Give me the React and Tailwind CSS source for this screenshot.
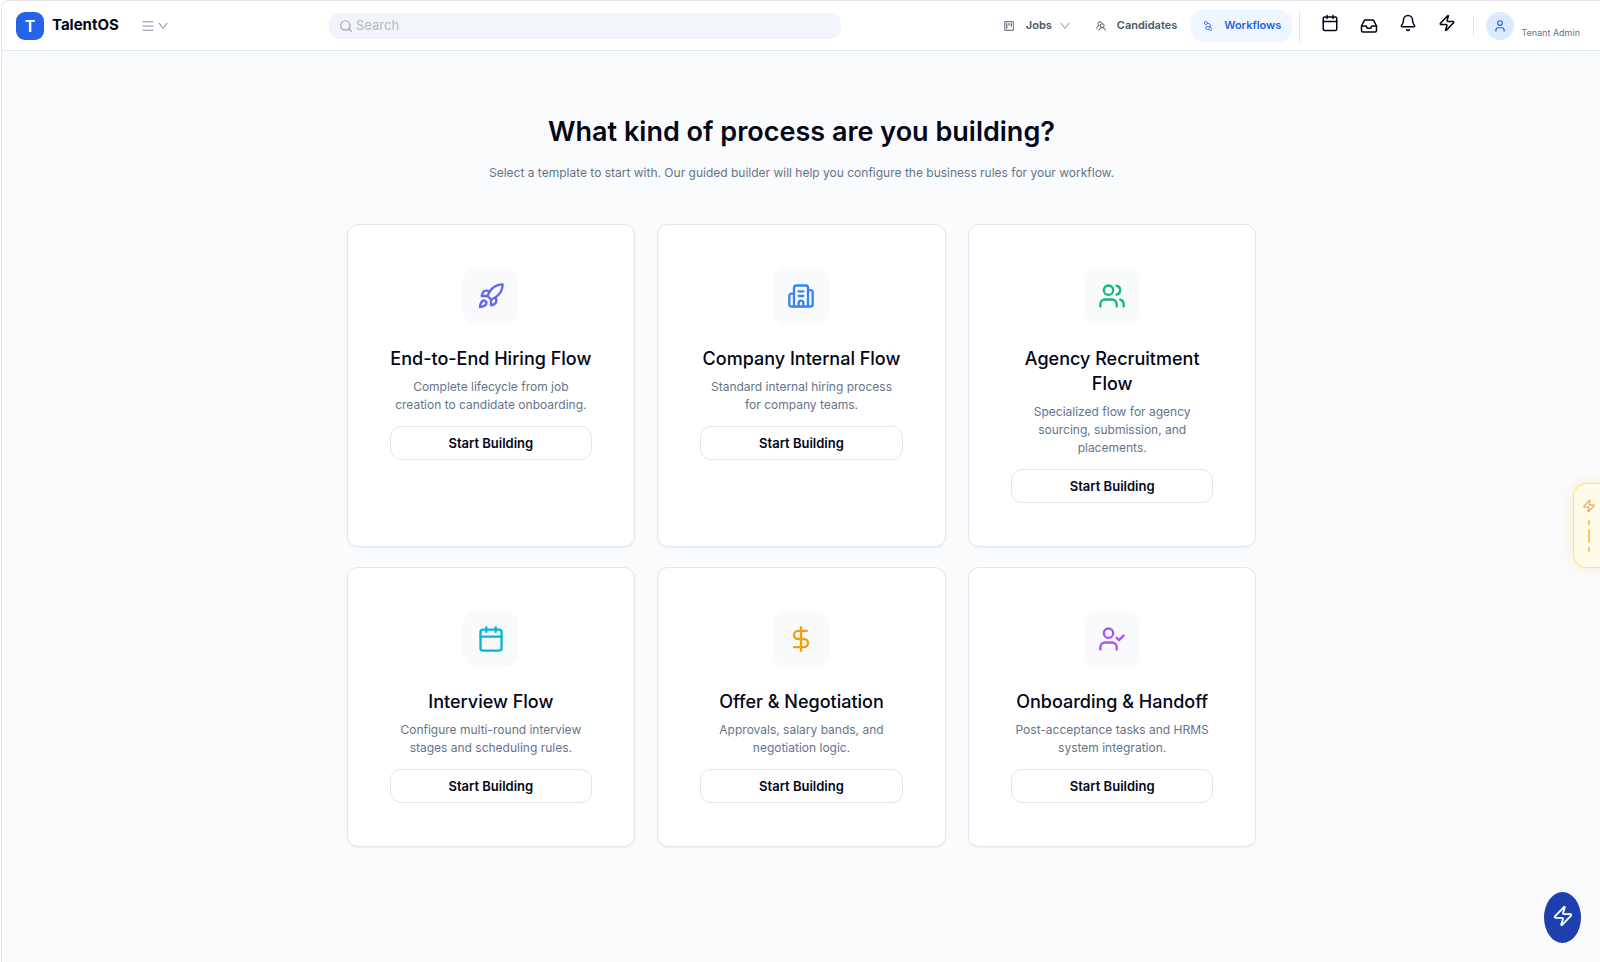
import { Bell, Building2, Calendar, DollarSign, Inbox, Rocket, Search, User, UserCheck, Users, Zap } from 'lucide-react';
import {
  AiOutlineDown,
  AiOutlineMenu,
  AiOutlineNodeIndex,
  AiOutlineProject,
  AiOutlineTeam,
} from 'react-icons/ai';

const templates = [
  {
    title: 'End-to-End Hiring Flow',
    text: 'Complete lifecycle from job creation to candidate onboarding.',
    Icon: Rocket,
    color: 'text-[#6366f1]',
  },
  {
    title: 'Company Internal Flow',
    text: 'Standard internal hiring process for company teams.',
    Icon: Building2,
    color: 'text-[#3b82f6]',
  },
  {
    title: 'Agency Recruitment Flow',
    text: 'Specialized flow for agency sourcing, submission, and placements.',
    Icon: Users,
    color: 'text-[#10b981]',
  },
  {
    title: 'Interview Flow',
    text: 'Configure multi-round interview stages and scheduling rules.',
    Icon: Calendar,
    color: 'text-[#06b6d4]',
  },
  {
    title: 'Offer & Negotiation',
    text: 'Approvals, salary bands, and negotiation logic.',
    Icon: DollarSign,
    color: 'text-[#f59e0b]',
  },
  {
    title: 'Onboarding & Handoff',
    text: 'Post-acceptance tasks and HRMS system integration.',
    Icon: UserCheck,
    color: 'text-[#a855f7]',
  },
];

function Header() {
  return (
    <header className="flex h-[50px] items-center rounded-tl-lg border-b border-[#e2e8f0] bg-white pl-3.5 pr-5">
      <div className="flex w-[313px] shrink-0 items-center">
        <span className="flex size-7 items-center justify-center rounded-[9px] bg-[#2563eb] text-base font-semibold text-white">
          T
        </span>
        <span className="ml-2 text-[15px] font-bold text-[#020617]">TalentOS</span>
        <button type="button" aria-label="Menu" className="ml-[22px] flex items-center gap-0.5 text-[#8492a6]">
          <AiOutlineMenu className="size-3.5" />
          <AiOutlineDown className="size-3" />
        </button>
      </div>

      <label className="flex h-[26px] w-[512px] items-center gap-[3px] rounded-[10px] bg-[#f1f5f9] px-2.5">
        <Search className="size-3.5 shrink-0 text-[#94a3b8]" />
        <input
          type="text"
          aria-label="Search"
          placeholder="Search"
          className="w-full bg-transparent text-[13px] outline-none placeholder:text-[#b4bac4]"
        />
      </label>

      <nav className="ml-auto flex items-center text-[11px] font-semibold text-[#475569]">
        <a href="#jobs" className="flex items-center">
          <AiOutlineProject className="size-3" />
          <span className="ml-[11px]">Jobs</span>
          <AiOutlineDown className="ml-[7px] size-3 text-[#94a3b8]" />
        </a>
        <a href="#candidates" className="ml-6 flex items-center gap-2.5">
          <AiOutlineTeam className="size-3" />
          Candidates
        </a>
        <a
          href="#workflows"
          className="ml-3.5 flex h-8 items-center gap-2.5 rounded-xl bg-[#eff6ff] px-[11px] text-[#2563eb]"
        >
          <AiOutlineNodeIndex className="size-3" />
          Workflows
        </a>
      </nav>

      <div className="ml-[7px] flex h-8 items-center border-l border-[#e2e8f0] pl-2.5 text-[#020617]">
        <button type="button" aria-label="Calendar" className="flex w-[39px] justify-center pb-1.5">
          <Calendar className="size-[18px]" strokeWidth={2} />
        </button>
        <button type="button" aria-label="Inbox" className="flex w-[39px] justify-center">
          <Inbox className="size-[18px]" strokeWidth={2} />
        </button>
        <button type="button" aria-label="Notifications" className="flex w-[39px] justify-center pb-1.5">
          <Bell className="size-[18px]" strokeWidth={2} />
        </button>
        <button type="button" aria-label="Quick actions" className="flex w-[39px] justify-center pb-1.5">
          <Zap className="size-[18px]" strokeWidth={2} />
        </button>
      </div>

      <div className="ml-[7px] h-[22px] border-l border-[#e2e8f0]" />

      <button type="button" className="ml-3 flex items-center gap-[7px]">
        <span className="flex size-7 items-center justify-center rounded-full bg-[#dbeafe] text-[#2563eb]">
          <User className="size-3.5" strokeWidth={2} />
        </span>
        <span className="whitespace-nowrap pt-3.5 text-[9px] text-[#64748b]">Tenant Admin</span>
      </button>
    </header>
  );
}

function TemplateCard({ title, text, Icon, color }) {
  return (
    <article className="flex flex-col items-center rounded-[11px] border border-[#e2e8f0] bg-white px-[42px] py-[43px] text-center shadow-xs">
      <div className={`flex size-14 items-center justify-center rounded-[14px] bg-[#f8fafc] ${color}`}>
        <Icon className="size-7" strokeWidth={2} />
      </div>
      <h2 className="mt-[22px] text-[18px] leading-[25px] font-medium text-[#020617]">{title}</h2>
      <p className="mt-[7px] px-0.5 text-[12px] leading-[18px] text-[#64748b]">{text}</p>
      <button
        type="button"
        className="mt-3 h-[34px] w-full rounded-[11px] border border-[#e2e8f0] bg-white pt-0.5 text-[13px] font-semibold text-[#020617]"
      >
        Start Building
      </button>
    </article>
  );
}

export default function App() {
  return (
    <div className="min-h-screen bg-white pl-px font-['Inter',sans-serif]">
      <div className="min-h-screen rounded-tl-lg border-l border-t border-[#e5e7eb] bg-[#fafbfd]">
        <Header />
        <div className="pl-px">
          <main className="mx-auto max-w-[910px] pt-[61px]">
            <h1 className="text-center text-[27px] leading-10 font-semibold text-[#020617]">
              What kind of process are you building?
            </h1>
            <p className="mt-[11px] text-center text-[12px] leading-5 text-[#64748b]">
              Select a template to start with. Our guided builder will help you configure the business rules for your
              workflow.
            </p>
            <div className="mt-[41px] grid grid-cols-3 gap-x-[22px] gap-y-5">
              {templates.map((t) => (
                <TemplateCard key={t.title} {...t} />
              ))}
            </div>
          </main>
        </div>
      </div>

      <button
        type="button"
        aria-label="Open quick panel"
        className="fixed top-[483px] right-0 flex h-[85px] w-[27px] flex-col items-center rounded-l-[14px] border border-r-0 border-[#fde08a] bg-[#fffbeb] pt-[15px] pl-[3px] shadow-[0_0_14px_rgba(251,191,36,0.25)]"
      >
        <Zap className="size-3.5 text-[#eda864]" strokeWidth={2} />
        <span className="mt-[7px] flex flex-col items-center gap-1">
          <span className="h-[5px] w-0.5 rounded-full bg-[#fcc64f]" />
          <span className="h-3.5 w-0.5 rounded-full bg-[#fcc64f]" />
          <span className="h-[5px] w-0.5 rounded-full bg-[#fcc64f]" />
        </span>
      </button>

      <button
        type="button"
        aria-label="Quick actions"
        className="fixed right-[19px] bottom-[19px] flex h-[51px] w-[37px] items-center justify-center rounded-[50%] bg-[#1e40af] pb-1 text-white"
      >
        <Zap className="size-[22px]" strokeWidth={2} />
      </button>
    </div>
  );
}
